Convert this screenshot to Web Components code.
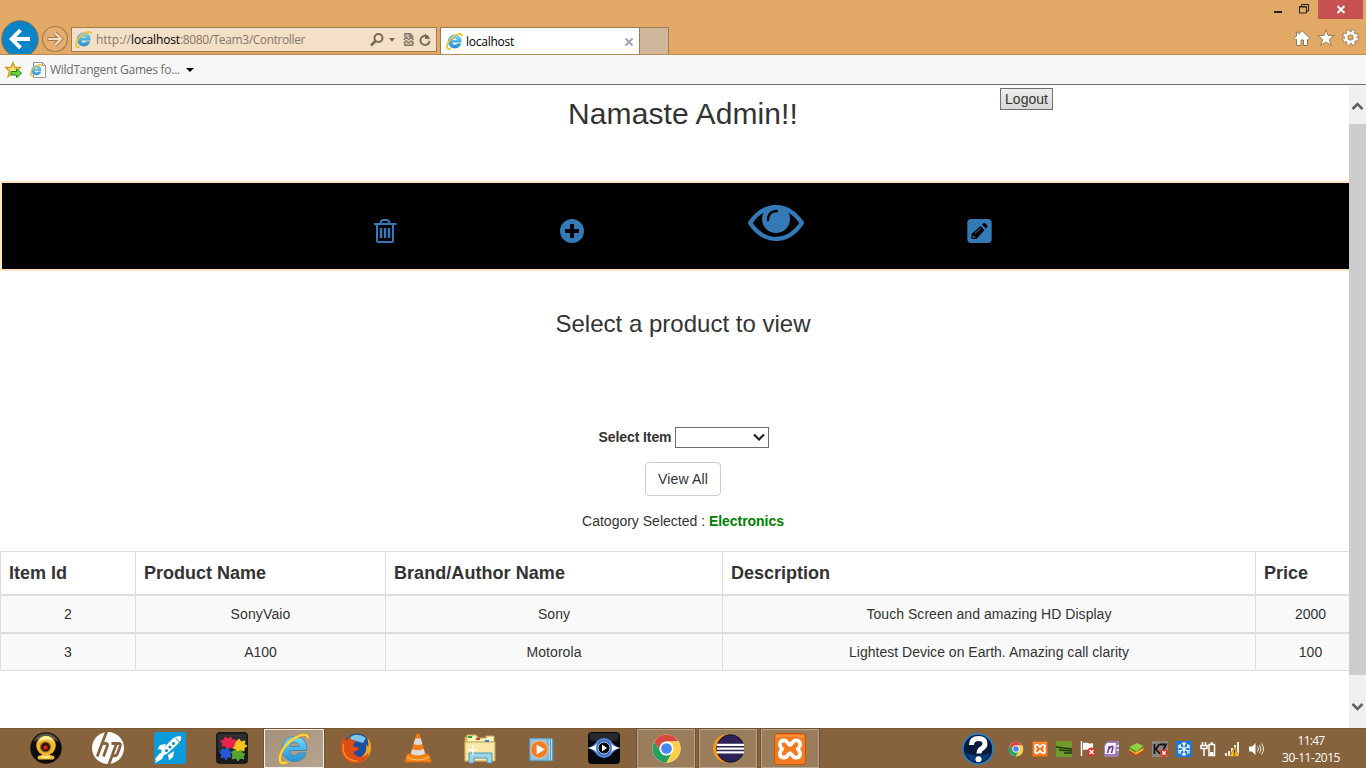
<!DOCTYPE html>
<html lang="en">
<head>
<meta charset="utf-8">
<title>localhost</title>
<style>
html,body{margin:0;height:100%;overflow:hidden}
body{font-family:"Liberation Sans",Arial,sans-serif;font-size:14px;color:#333}
</style>
</head>
<body>
<desktop-screen></desktop-screen>
<script>
const define=(name,html,ready)=>{
  const t=document.createElement('template');
  t.innerHTML=html;
  customElements.define(name,class extends HTMLElement{
    connectedCallback(){
      if(this.shadowRoot)return;
      this.attachShadow({mode:'open'}).append(t.content.cloneNode(true));
      if(ready)ready(this,this.shadowRoot);
    }
  });
};

/* Text tracked to a fixed advance width */
define('fit-text','<style>:host{display:inline-block;white-space:nowrap}span{display:inline-block}</style><span><slot></slot></span>',(h,r)=>{
  const w=+h.getAttribute('w'),s=r.querySelector('span');
  h.style.width=w+'px';
  s.style.letterSpacing='0';
  const n=s.getBoundingClientRect().width;
  s.style.letterSpacing=((w-n)/h.textContent.length)+'px';
});

const ie=`<defs><linearGradient id="b" x1="0" y1="0" x2="0" y2="1"><stop offset="0" stop-color="#7fdcfb"/><stop offset=".5" stop-color="#46b6ea"/><stop offset="1" stop-color="#2b8fd0"/></linearGradient></defs>
<path fill="url(#b)" stroke="#2580bd" stroke-width=".7" d="M16.500 3.500C9.500 3.500 4 9 4 16s5.500 12.500 12.500 12.500c5.700 0 10-3.100 11.700-8.500h-7.500c-.8 1.500-2.200 2.400-4.200 2.400-3 0-4.900-1.900-5-4.900h17.200C29.500 9.500 24.500 3.500 16.500 3.500zm-4.900 10c.5-2.600 2.200-4 4.900-4s4.300 1.400 4.700 4z"/>
<path fill="none" stroke="#d69a12" stroke-width="2.900" d="M30 5.500c0-5-6-4.500-12.500-1C9.500 8.800 1.500 18.500 1.800 26.500c.2 4.500 4.200 4.200 7.200 2.300"/><path fill="none" stroke="#ffd83a" stroke-width="2.100" d="M30 5.500c0-5-6-4.500-12.500-1C9.500 8.800 1.500 18.500 1.800 26.500c.2 4.500 4.200 4.200 7.200 2.300"/>`;
const chrome=`<circle cx="16" cy="16" r="14.500" fill="#fff"/><path fill="#d9483b" d="M3.400 8.800l6.400 11.100A7.200 7.200 0 0 1 16 8.800h12.600A14.500 14.500 0 0 0 3.400 8.800z"/><path fill="#22a163" d="M3.400 8.800A14.500 14.500 0 0 0 16 30.500l6.200-10.900A7.200 7.200 0 0 1 9.700 19.600z"/><path fill="#ffcf44" d="M28.600 8.800A14.500 14.500 0 0 1 16 30.500l6.200-10.900A7.200 7.200 0 0 0 16 8.800z"/><circle cx="16" cy="16" r="6.900" fill="#fff"/><circle cx="16" cy="16" r="5.500" fill="#4787ef"/>`;
const xampp=`<rect x=".5" y=".5" width="31" height="31" rx="3" fill="#f47a20" stroke="#c4540a"/><path d="M2 2h28v3Q16 2 2 5z" fill="#ffa158" opacity=".6"/><path fill="none" stroke="#fff" stroke-width="3.700" stroke-linejoin="round" d="M16 12C14 12 14 7.300 10 7.300 5.200 7.300 4.700 12.500 8.300 16 4.700 19.500 5.200 24.700 10 24.700 14 24.700 14 20 16 20S18 24.700 22 24.700C26.800 24.700 27.300 19.500 23.700 16 27.300 12.500 26.800 7.300 22 7.300 18 7.300 18 12 16 12z"/>`;
const ICONS={
ie:['0 0 32 32',ie],
chrome:['0 0 32 32',chrome],
xampp:['0 0 32 32',xampp],
cam:['0 0 32 32',`<circle cx="16" cy="16" r="15.700" fill="#0b0b08"/><path d="M3 10A14 14 0 0 1 29 10Q16 2 3 10z" fill="#55534a"/><path d="M8 24q8-3 16 0 1 3-1 3.500H9Q7 27 8 24z" fill="#f5c03c"/><circle cx="16" cy="13.500" r="9.800" fill="#f2b632"/><path d="M8.500 10q2-6 7.500-6t7.500 6q-7-5-15 0z" fill="#fff0a0"/><circle cx="15.500" cy="15" r="5.500" fill="#8c6a16"/><circle cx="15.500" cy="15" r="4.300" fill="#2b1205"/><circle cx="15.500" cy="15.500" r="2.300" fill="#e3201b"/><path d="M11 25h9" stroke="#ffe68a" stroke-width="2"/>`],
hp:['0 0 32 32',`<circle cx="16" cy="16" r="16" fill="#fff"/><g fill="none" stroke="#86633c" stroke-width="2.800"><path d="M14.600-.5L5.200 24.500M9.500 11.500h4q2.600 0 1.800 2.500L11.500 24.500M16.700 33l7.800-21.500M19.500 11.500h7q2.500 0 1.700 2.500l-2.700 7.500q-.8 2.300-3.200 2.300h-3.500"/></g>`],
rocket:['0 0 32 32',`<path d="M0 3q0-3 3-3h29v29q0 3-3 3H0z" fill="#0b9bdc"/><path fill="#fff" d="M27 4.500c-4-.6-7 .8-9.500 3.300l-9 9c-1 1-1.500 3.500-1 5.500 2 .8 4.500.5 5.800-.8l10-9C26 10 27.700 7.500 27 4.500zM12 12l-6 1-2.500 4 5 1zM20 19l-1 6-4 3.500-1-5.500zM6 21l-5 6 1 1-1 3 7-4 2-4z"/><g fill="#0b83c0"><circle cx="12.500" cy="18.500" r="1.500"/><circle cx="16" cy="15" r="1.500"/><circle cx="19.500" cy="11.500" r="1.500"/></g><path d="M21.500 6l4 4" stroke="#0b9bdc"/>`],
puzzle:['0 0 32 32',`<rect width="32" height="32" rx="4" fill="#1b1b1b"/><path d="M2 2h28v10Q16 20 2 20z" fill="#444" opacity=".5"/><g stroke-linejoin="round" stroke-width="1"><path d="M5 9l3-1 1-3 3 2 3-2 1 3 4 0-1 3 2 2-3 1-1 2-3-1-3 2-1-3-4 0 1-2z" fill="#eb2453" stroke="#eb2453"/><path d="M20 10l3-3 2 3 4-1-1 3 3 2-3 2 0 3-4-1-3 2-1-3-3-1 2-2z" fill="#f5c51b" stroke="#f5c51b"/><path d="M6 17l3 1 3-2 1 3 3 1-2 2 1 3-3 0-2 3-2-3-3 1 1-3-2-2z" fill="#2558d8" stroke="#2558d8"/><path d="M16 20l3-2 3 2 3-2 1 3 3 1-2 2 1 3-4-1-2 3-2-3-4 1 1-3z" fill="#57a52f" stroke="#57a52f"/></g>`],
firefox:['0 0 32 32',`<circle cx="17" cy="14.500" r="13" fill="#1b4f9c"/><path d="M8 7Q16-1 26 6L23 11 16 9z" fill="#77c6ea"/><path fill="#f6a821" d="M27 5.500c5 4 5.200 13 1.500 18.500C25 29.500 19 32 12 30.500l10-6c4-3 5-7 4-12 1.500 1 2 2 2.300 3 .3-4-.3-7-1.300-10z"/><path fill="#dd4e16" d="M3 5c-3.500 7-3.300 16 1.500 21.500S18 32.500 24 28.500c3-2 4.500-5 4.500-8-3 4-7.500 5-11 3.500-3-1-4-3-3.500-4.500 2 0 4-1 5-2.500l-2-2-4-.5 1-3 2.500-2.500-5-1-1.500-4-2.500 3.500L5 8z"/><path fill="none" stroke="#f4902b" stroke-width="1.500" d="M3.500 12c-2 10 4 17 14 17"/>`],
vlc:['0 0 32 32',`<path d="M5.500 22h21L29.500 30H2.500z" fill="#f28618" stroke="#d96b0a"/><path d="M14.500 2q1.500-1.200 3 0l6.500 22q-8 4-16 0z" fill="#f07f14"/><path d="M13.200 6.500h5.600l1.500 5.500q-4.300 2-8.600 0zM10.200 17q6 2.500 11.600 0l1.400 4.800q-7.200 3.500-14.400 0z" fill="#ddd"/><path d="M4.500 25q11.500 6 23 0" fill="none" stroke="#ffc069"/>`],
files:['0 0 32 32',`<path d="M1 5h10l2 2h16v22H1z" fill="#eed888" stroke="#bf9d46"/><path d="M3 3h9l2 3h8V4h8v6H3z" fill="#fff3bf" stroke="#c9aa55"/><path d="M1 10h30v19H1z" fill="#f8e8a7" stroke="#c9aa55"/><path d="M4 4h4v2H4z" fill="#24a83b"/><path d="M12 6h4v2h-4z" fill="#d43b2b"/><path d="M21 8h4v2h-4z" fill="#287fd6"/><path d="M5 31V21h23v10h-5v-5H10v5z" fill="#9ed5ec" stroke="#5097b8"/><path d="M9 13v10M4 18h10" stroke="#fff" stroke-width="1.200"/>`],
media:['0 0 32 32',`<path d="M2 5h26v25H2z" fill="#5198be"/><path d="M5 5h19v24H5z" fill="#91cae4"/><path d="M26 5v24M23.500 6v23" stroke="#c5e8f6"/><path d="M2 5h20v24H2z" fill="#8fc5e0" stroke="#5b9dbf"/><circle cx="12.500" cy="17" r="9.500" fill="#f57b22" stroke="#f5c09a"/><path d="M9.500 11.500v11l9-5.500z" fill="#fff"/>`],
eye3:['0 0 32 32',`<rect width="32" height="32" rx="4" fill="#07090d"/><path d="M2 1h28q2 5-2 8H4Q0 6 2 1z" fill="#3a3d42" opacity=".6"/><path d="M0 16Q6 14 9 9q7-6 14 0 3 5 9 7-6 2-9 7-7 6-14 0-3-5-9-7z" fill="#5a86e0"/><path d="M0 16Q6 15 10 11q6-5 12 0 4 4 10 5-6 1-10 5-6 5-12 0-4-4-10-5z" fill="#fff"/><circle cx="16" cy="16" r="8" fill="#3669b7"/><circle cx="16" cy="16" r="6" fill="#05070b" stroke="#a9d2ff"/><path d="M14 12.500v7l5-3.500z" fill="#fff"/>`],
eclipse:['0 0 32 32',`<circle cx="14.500" cy="16" r="14.500" fill="#f7941e"/><circle cx="18" cy="16" r="14.200" fill="#2c2255" stroke="#171229"/><path d="M4 12.200h28M4 16.100h28M4 20h28" stroke="#fff" stroke-width="2.200"/>`],
help:['0 0 32 32',`<circle cx="16" cy="16" r="15" fill="#06193e" stroke="#1688d8" stroke-width="1.500"/><path d="M4 20q12 5 24 0-3 9-12 9T4 20z" fill="#0f4a91" opacity=".7"/><path d="M9.500 12q0-6.500 7-6.500 6.500 0 6.500 5 0 3-3 5-3 1.500-3 5" fill="none" stroke="#fff" stroke-width="5"/><circle cx="16.500" cy="26.300" r="3" fill="#fff"/>`],
nv:['0 0 16 16',`<path d="M0 0h16v16H0z" fill="#6f9c2d"/><path d="M0 6l7 1 9 1M3 9l13 1M8 12h8" stroke="#1f3510" stroke-width="1.400"/>`],
flag:['0 0 16 16',`<path d="M1.500 0v15" stroke="#fff" stroke-width="1.500"/><path d="M3 2q3-1 5 0t5 0v7q-3 1-5 0T3 9z" fill="#fff"/><circle cx="11.500" cy="11" r="4.500" fill="#d9352b"/><path d="M9.500 9l4 4m0-4l-4 4" stroke="#fff" stroke-width="1.400"/>`],
note:['0 0 16 16',`<path d="M4 0h11v14l-2 2H1L0 14V4z" fill="#9a7bb5"/><path d="M3 2h9l-1 11H1V5z" fill="#f8f2fb"/><path d="M3.500 12l2-7M4.800 8q4.500-5 4-1l-1.300 5" fill="none" stroke="#6a3a88" stroke-width="1.500"/><path d="M12.500 4H15v2h-2.500zM12.500 8H15v2h-2.500z" fill="#e4d1ef"/>`],
layers:['0 0 16 16',`<path d="M1 9l7 4.500L15.500 9v2L8 15.500 1 11z" fill="#d93723"/><path d="M1 7l7 4.500L15.500 7v2L8 13.500 1 9z" fill="#f2c925"/><path d="M1 6l8-4 6.500 3-7.500 6z" fill="#90cf3f"/><path d="M1 6v2l7 4v-2z" fill="#4f981b"/>`],
k:['0 0 16 16',`<path d="M0 0h16v16H0z" fill="#8b8680"/><path d="M2.500 3v10M7.500 3L4 8l4 5M8 3.500h6L10 11" fill="none" stroke="#161616" stroke-width="1.800"/><circle cx="12" cy="12" r="4" fill="#d9352b"/><path d="M10.300 10.300l3.400 3.400m0-3.400l-3.400 3.400" stroke="#fff" stroke-width="1.300"/>`],
snow:['0 0 16 16',`<path d="M0 0h16v16H0z" fill="#1679dd"/><path d="M8 1v14M2 4.500l12 7M14 4.500l-12 7M6 2l2 2 2-2M6 14l2-2 2 2M2 7l2.500-1L4 3M14 9l-2.500 1 .5 3M14 7l-2.500-1L12 3M2 9l2.500 1L4 13" fill="none" stroke="#fff" stroke-width="1.200"/>`],
power:['0 0 16 16',`<path d="M2.500 1v3M5.500 1v3M1 4.500h6v3H1zM4 8v7" fill="none" stroke="#fff" stroke-width="1.500"/><path d="M9 3.500h5.500v11H9zM10.500 2h2.500" fill="none" stroke="#fff" stroke-width="1.500"/><path d="M10 11h3.500v3H10z" fill="#fff"/>`],
signal:['0 0 16 16',`<path d="M1 12h2v3H1zM4 10h2v5H4zM7 7h2v8H7zM10 4h2v11h-2zM13 1h2v14h-2z" fill="#eee"/><path d="M10.500 6l5 9.500h-10z" fill="#f7bd20" stroke="#986410" stroke-width=".6"/><path d="M10.500 9v3.500M10.500 13.300v1.300" stroke="#333" stroke-width="1.200"/>`],
sound:['0 0 16 16',`<path d="M1 5.500h3L7.500 2v12L4 10.500H1z" fill="#fff"/><path d="M9.500 5.500q2 2.500 0 5M11.500 4q3 4 0 8M13.500 2.500q4 5.500 0 11" fill="none" stroke="#eee" stroke-width="1"/>`],
back:['0 0 40 35',`<circle cx="20" cy="20" r="18.200" fill="#0a84c6" stroke="#6a6c62" stroke-width="1"/><path d="M30 20H12.500M20.500 11.200L11.700 20l8.800 8.800" fill="none" stroke="#fff" stroke-width="3.900"/>`],
fwd:['0 0 28 28',`<circle cx="14" cy="14" r="12.500" fill="#e5ad70" stroke="#a47c4b" stroke-width="1.200"/><path d="M6.500 14h12M14 8l6 6-6 6" fill="none" stroke="#a47c4b" stroke-width="4"/><path d="M7.300 14h11.200M14 8l6 6-6 6" fill="none" stroke="#f3dcc2" stroke-width="2.200"/>`],
search:['0 0 16 16',`<circle cx="9.500" cy="6" r="4" fill="none" stroke="#76695a" stroke-width="2"/><path d="M6.500 9L2 13.500" stroke="#76695a" stroke-width="2.500"/>`],
compat:['0 0 12 14',`<path d="M2.500 5V1.500h5l2.500 2.500v2M2.500 9.500v3H10v-3" fill="#c6b6a3" stroke="#84776a" stroke-width="1.200"/><path d="M1.500 7.500L4 5l2.200 2.200L8.500 5l2.300 2.500M1.500 10.500L4 8l2.200 2.200L8.500 8l2.300 2.500M7 1.500V4h3" fill="none" stroke="#84776a" stroke-width="1.200"/>`],
reload:['0 0 14 14',`<path d="M10.500 4.300A4.600 4.600 0 1 0 11.600 8" fill="none" stroke="#76695a" stroke-width="1.900"/><path d="M7 .5v5.500h5.500z" fill="#76695a"/>`],
home:['0 0 18 18',`<path d="M9 1.500l8 8-1.500 1.500-1-.7V16.500H10.500V11H8v5.500H3.500V10.300l-1 .7L1 9.500l2.500-2.500V3h2.200v2z" fill="#fff" stroke="#987448" stroke-width="1"/>`],
star:['0 0 18 18',`<path d="M9 .8l2 5.700h6.200l-4.900 3.900 1.900 6.100L9 12.900l-5.200 3.600 1.900-6.100L.8 6.500H7z" fill="#fff" stroke="#987448" stroke-width=".9"/>`],
gear:['0 0 18 18',`<circle cx="9" cy="9" r="6.700" fill="none" stroke="#987448" stroke-width="4.200" stroke-dasharray="3.700 1.562"/><circle cx="9" cy="9" r="4.700" fill="none" stroke="#987448" stroke-width="4.400"/><circle cx="9" cy="9" r="6.400" fill="none" stroke="#fff" stroke-width="3.200" stroke-dasharray="2.600 2.426" stroke-dashoffset="-.5"/><circle cx="9" cy="9" r="4.700" fill="none" stroke="#fff" stroke-width="2.900"/>`],
favadd:['0 0 18 18',`<path d="M8 1.500l2 5h5.500l-4.300 3.600L13 15.500l-5-3-5 3 1.500-5.400L.8 6.500H6z" fill="#fde36b" stroke="#d19a20" stroke-width="1.300"/><path d="M6 10.500h5.500V8l5 4.200-5 4.300V14H6z" fill="#67d243" stroke="#23881f"/>`],
iepage:['0 0 18 18',`<path d="M3.500 1.500h9l3 3v12h-12z" fill="#fff" stroke="#999"/><path d="M12.500 1.500v3h3" fill="none" stroke="#999"/><g transform="translate(0 3) scale(.39)">${ie}</g>`],
trash:['0 0 24 26',`<path fill="none" stroke="#337ab7" stroke-width="2" stroke-linejoin="round" d="M3 6v16.500q0 1.500 1.500 1.500h13q1.500 0 1.500-1.500V6M6.500 5q.5-3 3-3h3q2.500 0 3 3"/><path d="M0 6h22.500" stroke="#337ab7" stroke-width="2"/><path d="M7 10v10M11 10v10M15 10v10" stroke="#337ab7" stroke-width="2.400"/>`],
plus:['0 0 24 24',`<path fill="#337ab7" fill-rule="evenodd" d="M12 0a12 12 0 1 0 0 24 12 12 0 0 0 0-24zM10.700 5h2.600q.7 0 .7.700V10h4.300q.7 0 .7.700v2.600q0 .7-.7.700H14v4.300q0 .7-.7.700h-2.600q-.7 0-.7-.7V14H5.700q-.7 0-.7-.7v-2.600q0-.7.7-.7H10V5.700q0-.7.700-.7z"/>`],
eye:['0 0 56 36',`<path fill="none" stroke="#337ab7" stroke-width="4.200" stroke-linejoin="round" d="M2.100 18Q13 2.100 28 2.100T53.900 18Q43 33.900 28 33.900T2.100 18z"/><circle cx="28" cy="14" r="14" fill="#337ab7"/><path d="M20 15q0-9 9-9" fill="none" stroke="#000" stroke-width="2.400" stroke-linecap="round"/>`],
edit:['0 0 25 24',`<rect x=".3" width="24.400" height="24" rx="4" fill="#337ab7"/><path d="M4.500 20v-5L13.500 7l4 4L9.500 20zM15 5.500l1.700-1.500q.8-.5 1.500.2l2 2q.8.800.2 1.600L18.800 9.500z"/><path d="M8 14.500L13.700 9.200" stroke="#337ab7" stroke-width=".9"/><path d="M6 17l1.700 1.700" stroke="#337ab7" stroke-width="1.500"/>`]
};
define('ui-icon','<style>:host{display:block;flex:none}svg{display:block;width:100%;height:100%;overflow:hidden}</style><div></div>',(h,r)=>{
  const [box,body]=ICONS[h.getAttribute('name')];
  const [w,ht]=(h.getAttribute('size')||'16 16').split(' ');
  h.style.width=w+'px';h.style.height=(ht||w)+'px';
  const d=r.querySelector('div');d.style.height='100%';
  d.innerHTML=`<svg viewBox="${box}">${body}</svg>`;
});

define('window-controls',`<style>:host{display:flex;justify-content:flex-end;height:19px;padding-right:3px}
svg{display:block}</style>
<svg width="92" height="19" viewBox="1271 0 92 19"><path d="M1274 11h8v2h-8z" fill="#222"/><path d="M1299.500 6.500h7v6.500h-7zM1299 7h8M1301.500 6.500v-2h7v6.500h-2" fill="none" stroke="#222"/><path d="M1318 0h45v19h-45z" fill="#c75050"/><path d="M1337.500 6l7 7m0-7l-7 7" stroke="#fff" stroke-width="1.900"/></svg>`);

define('address-bar',`<style>:host{display:flex;align-items:center;box-sizing:border-box;width:366px;height:25px;border:1px solid #a17c4d;background:#f4dfc7;padding:0 4px 0 3px;font:12px/20px "Open Sans","Noto Sans",sans-serif;color:#83786b}
.u{flex:1;margin-left:4px;display:flex}.u b{font-weight:400;color:#000}i{width:0;border:3.500px solid transparent;border-top:4px solid #76695a;border-bottom:0;margin:1px 7px 0 4px}</style>
<ui-icon name="ie" size="17"></ui-icon><div class="u"><fit-text w="35">http://</fit-text><b><fit-text w="49">localhost</fit-text></b><fit-text w="125">:8080/Team3/Controller</fit-text></div>
<ui-icon name="search" size="16"></ui-icon><i></i><ui-icon name="compat" size="13 15"></ui-icon><ui-icon name="reload" size="14" style="margin-left:3px"></ui-icon>`);

define('browser-tab',`<style>:host{display:flex;align-items:center;box-sizing:border-box;width:200px;height:27px;border:1px solid #a17c4d;border-bottom:0;background:#fff;padding:1px 4px 0 5px;font:12px/20px "Open Sans","Noto Sans",sans-serif;color:#000}
span{flex:1;margin-left:3px}svg{margin-right:1px}</style><ui-icon name="ie" size="17"></ui-icon><span><slot></slot></span><svg width="10" height="10"><path d="M1.500 1.500l7 7m0-7l-7 7" stroke="#a4a4a4" stroke-width="2"/></svg>`);

define('browser-frame',`<style>:host{display:flex;flex-direction:column;height:85px;box-sizing:border-box;background:#e2a966;border-bottom:1px solid #707070}
.nav{display:flex;height:35px;border-bottom:1px solid #b98c54;padding-right:7px}
.new{width:29px;height:27px;box-sizing:border-box;border:1px solid #a17c4d;border-width:1px 1px 0 0;background:#d0b79c;margin-top:8px}
.tools{margin-left:auto;display:flex;gap:7px;padding-top:10px}
.fav{display:flex;align-items:center;flex:1;background:#f7f7f7;padding-left:5px;font:12px/20px "Open Sans","Noto Sans",sans-serif;color:#6d6d6d}
.fav ui-icon{margin-top:1px}
.fav i{border:4px solid transparent;border-top-color:#000;border-bottom:0;margin:1px 0 0 6px}</style>
<window-controls></window-controls>
<div class="nav"><ui-icon name="back" size="40 35"></ui-icon><ui-icon name="fwd" size="28" style="margin:6px 3px 0 1px"></ui-icon><address-bar style="margin:8px 3px 0 -1px"></address-bar><browser-tab style="margin-top:8px"><fit-text w="48">localhost</fit-text></browser-tab><div class="new"></div>
<div class="tools"><ui-icon name="home" size="18"></ui-icon><ui-icon name="star" size="18" style="margin-left:-.5px"></ui-icon><ui-icon name="gear" size="17"></ui-icon></div></div>
<div class="fav"><ui-icon name="favadd" size="18"></ui-icon><ui-icon name="iepage" size="18" style="margin:0 2px 0 7px"></ui-icon><fit-text w="130" style="margin-top:1px">WildTangent Games fo...</fit-text><i></i></div>`);

define('action-bar',`<style>:host{display:grid;box-sizing:border-box;height:90px;border:2px solid #ffe4c4;background:#000;grid-template-columns:372px 186px 188px 219px 1fr;padding-top:22px}
ui-icon{align-self:start}.low{margin-top:14px}</style>
<span></span><ui-icon class="low" name="trash" size="24 26" style="margin-top:13px"></ui-icon><ui-icon class="low" name="plus" size="24"></ui-icon><ui-icon name="eye" size="56 36"></ui-icon><ui-icon class="low" name="edit" size="25 24"></ui-icon>`);

define('data-row',`<style>:host{display:grid;grid-template-columns:135px 250px 337px 533px 110px;height:36px;border-bottom:2px solid #ddd;background:#f9f9f9;text-align:center;line-height:36px}
:host([head]){height:42px;border-top:1px solid #ddd;background:#fff;text-align:left;font-size:18px;font-weight:700;line-height:43px}
:host([last]){border-bottom-width:1px}
::slotted(*){border-left:1px solid #ddd}:host([head]) ::slotted(*){padding-left:8px}</style><slot></slot>`);

define('product-table',`<style>:host{display:block}</style>
<data-row head><div><fit-text w="58">Item Id</fit-text></div><div><fit-text w="122">Product Name</fit-text></div><div><fit-text w="171">Brand/Author Name</fit-text></div><div><fit-text w="99">Description</fit-text></div><div><fit-text w="44">Price</fit-text></div></data-row>
<data-row><div>2</div><div><fit-text w="60">SonyVaio</fit-text></div><div>Sony</div><div><fit-text w="245">Touch Screen and amazing HD Display</fit-text></div><div>2000</div></data-row>
<data-row last><div>3</div><div>A100</div><div><fit-text w="55">Motorola</fit-text></div><div><fit-text w="280">Lightest Device on Earth. Amazing call clarity</fit-text></div><div>100</div></data-row>`);

define('page-select',`<style>:host{display:flex;justify-content:flex-end;align-items:center;box-sizing:border-box;width:94px;height:21px;border:1px solid #6b6b6b;background:#fff;padding-right:3px}svg{display:block}</style><svg width="12" height="9"><path d="M1 1.500l5 5 5-5" fill="none" stroke="#222" stroke-width="2.200"/></svg>`);

define('admin-page',`<style>:host{display:flex;flex-direction:column;height:643px;background:#fff;align-items:stretch;overflow:hidden}
header{display:grid;grid-template-columns:366px 634px 366px;height:96px;box-sizing:border-box}
h2{grid-column:2;margin:12px 0 0;font:30px/33px "Liberation Sans",Arial,sans-serif;text-align:center}
.logout{justify-self:start;margin-top:3px;box-sizing:border-box;height:22px;width:53px;border:1px solid #707070;background:linear-gradient(#eee,#d8d8d8);line-height:20px;text-align:center}
h3{margin:40px 0 0;height:26px;font:24px/26px "Liberation Sans",Arial,sans-serif;text-align:center}
.row{display:flex;justify-content:center;align-items:center;gap:3px;padding-left:1px;height:21px;margin-top:90px;font-weight:700}
.row fit-text{line-height:18px;margin-top:-1px}
.btn{align-self:center;box-sizing:border-box;width:76px;height:34px;border:1px solid #ccc;border-radius:4px;line-height:32px;text-align:center;margin-top:14px}
p{margin:15px 0 20px;height:20px;line-height:20px;text-align:center}p b{color:green}</style>
<header><h2><fit-text w="230">Namaste Admin!!</fit-text></h2><div class="logout"><fit-text w="43">Logout</fit-text></div></header>
<action-bar></action-bar>
<h3><fit-text w="255">Select a product to view</fit-text></h3>
<div class="row"><fit-text w="73">Select Item</fit-text><page-select></page-select></div>
<div class="btn"><fit-text w="50">View All</fit-text></div>
<p><fit-text w="123">Catogory Selected :</fit-text> <b><fit-text w="75">Electronics</fit-text></b></p>
<product-table></product-table>`);

define('scroll-bar',`<style>:host{display:flex;flex-direction:column;width:17px;background:#f0f0f0}
.thumb{height:551px;background:#cdcdcd}.up{height:39px}.down{flex:1}svg{display:block}</style>
<div class="up"><svg width="17" height="39"><path d="M3.500 24l5-5 5 5" fill="none" stroke="#606060" stroke-width="2.600"/></svg></div><div class="thumb"></div><div class="down"><svg width="17" height="50"><path d="M3.500 29l5 5 5-5" fill="none" stroke="#606060" stroke-width="2.600"/></svg></div>`);

define('task-item',`<style>:host{display:flex;align-items:center;justify-content:center;box-sizing:border-box;width:60px;height:40px;margin:0 1px}
:host([open]){width:58px;height:39px;margin:1px 2px 0;border:1px solid #b9a58b;background:#9a7e5c;box-shadow:0 0 0 1px #6f5130}
:host([active]){height:39px;margin-top:1px;border:1px solid #f4eee5;background:linear-gradient(135deg,#a5917b,#b7a48e);box-shadow:0 0 0 1px #6f5130}</style><slot></slot>`);

define('task-bar',`<style>:host{display:flex;align-items:center;height:40px;box-sizing:border-box;background:#86633c;box-shadow:inset 0 1px #7a5930;padding-left:15px}
.tray{margin-left:auto;display:flex;align-items:center;gap:8px;padding-top:2px}
.clock{width:58px;margin:0 26px 0 18px;font:12px/17px "Open Sans","Noto Sans",sans-serif;color:#fff;text-align:center;padding-top:1px}</style><div class="tray"></div>`,(h,r)=>{
  const tray=r.querySelector('.tray');
  [['cam'],['hp'],['rocket'],['puzzle'],['ie','active'],['firefox'],['vlc'],['files'],['media',0,29],['eye3'],['chrome','open',31],['eclipse','open',31],['xampp','open']].forEach(([n,s,z])=>{
    const e=document.createElement('task-item');if(s)e.setAttribute(s,'');
    e.innerHTML=`<ui-icon name="${n}" size="${z||32}"></ui-icon>`;tray.before(e);
  });
  tray.innerHTML='<ui-icon name="help" size="32" style="margin-right:6px"></ui-icon>'+['chrome','xampp','nv','flag','note','layers','k','snow','power','signal','sound'].map(n=>`<ui-icon name="${n}" size="16"></ui-icon>`).join('');
  tray.insertAdjacentHTML('afterend','<div class="clock"><fit-text w="27">11:47</fit-text><fit-text w="58">30-11-2015</fit-text></div>');
});

define('desktop-screen',`<style>:host{display:flex;flex-direction:column;width:1366px;height:768px;overflow:hidden}
.view{position:relative;height:643px}scroll-bar{position:absolute;right:0;top:0;bottom:0}</style>
<browser-frame></browser-frame><div class="view"><admin-page></admin-page><scroll-bar></scroll-bar></div><task-bar></task-bar>`);
</script>
</body>
</html>
